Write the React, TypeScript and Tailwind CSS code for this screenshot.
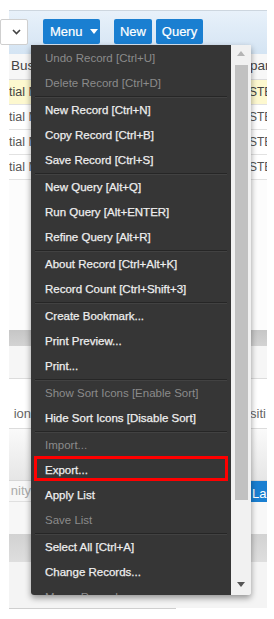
import React from "react";

type Item = { label: string; disabled?: boolean } | "sep";

const items: Item[] = [
  { label: "Undo Record [Ctrl+U]", disabled: true },
  { label: "Delete Record [Ctrl+D]", disabled: true },
  "sep",
  { label: "New Record [Ctrl+N]" },
  { label: "Copy Record [Ctrl+B]" },
  { label: "Save Record [Ctrl+S]" },
  "sep",
  { label: "New Query [Alt+Q]" },
  { label: "Run Query [Alt+ENTER]" },
  { label: "Refine Query [Alt+R]" },
  "sep",
  { label: "About Record [Ctrl+Alt+K]" },
  { label: "Record Count [Ctrl+Shift+3]" },
  "sep",
  { label: "Create Bookmark..." },
  { label: "Print Preview..." },
  { label: "Print..." },
  "sep",
  { label: "Show Sort Icons [Enable Sort]", disabled: true },
  { label: "Hide Sort Icons [Disable Sort]" },
  "sep",
  { label: "Import...", disabled: true },
  { label: "Export..." },
  { label: "Apply List" },
  { label: "Save List", disabled: true },
  "sep",
  { label: "Select All [Ctrl+A]" },
  { label: "Change Records..." },
  { label: "Merge Records...", disabled: true },
];

function Row({ left, right, yellow }: { left: string; right: string; yellow?: boolean }) {
  return (
    <div
      className={
        "flex h-[25px] items-center justify-between border-b border-[#e2e2e2] text-[12.5px] " +
        (yellow ? "bg-[#fdf8cf] text-[#444]" : "bg-white text-[#555]")
      }
    >
      <div className="whitespace-nowrap overflow-hidden w-[22px]">{left}</div>
      <div className="whitespace-nowrap overflow-hidden w-[18px] text-[12px]">{right}</div>
    </div>
  );
}

export default function App() {
  return (
    <div className="relative w-[274px] h-[619px] overflow-hidden bg-white font-['Liberation_Sans',Arial,sans-serif]">
      {/* page */}
      <div className="ml-[9px] w-[258px] pt-[10px] flex flex-col">
        {/* toolbar */}
        <div className="h-[44px] border-t border-[#cdd6df] bg-gradient-to-b from-[#e8f1fa] to-[#d4e4f3] flex items-start pt-[8px]">
          <div className="-ml-[9px] w-[28px] h-[26px] bg-white border border-[#cfcfcf] rounded-[2px] flex items-center justify-end pr-[6px]">
            <svg width="9" height="6" viewBox="0 0 9 6">
              <path d="M1 1 L4.5 4.5 L8 1" fill="none" stroke="#444" strokeWidth="1.6" />
            </svg>
          </div>
          <div className="ml-[15px] w-[57px] h-[25px] bg-[#1a7fd1] rounded-[2px] text-white text-[13px] flex items-center pl-[7px] gap-[7px] [-webkit-text-stroke:0.2px_#ffffff]">
            <span>Menu</span>
            <svg width="8" height="6" viewBox="0 0 8 6">
              <path d="M0 0 H8 L4 5 Z" fill="#fff" />
            </svg>
          </div>
          <div className="ml-[14px] w-[38px] h-[25px] bg-[#1a7fd1] rounded-[2px] text-white text-[13px] flex items-center justify-center [-webkit-text-stroke:0.2px_#ffffff]">
            New
          </div>
          <div className="ml-[4px] w-[47px] h-[25px] bg-[#1a7fd1] rounded-[2px] text-white text-[13px] flex items-center justify-center [-webkit-text-stroke:0.2px_#ffffff]">
            Query
          </div>
        </div>
        {/* table */}
        <div className="flex h-[26px] items-center justify-between border-b border-[#dcdcdc] bg-[#f7f7f7] text-[13.5px] text-[#444]">
          <div className="whitespace-nowrap overflow-hidden w-[22px] pl-[2px]">Business</div>
          <div className="whitespace-nowrap overflow-hidden w-[18px] pl-[1px]">par</div>
        </div>
        <Row left="tial Match" right="STEP" yellow />
        <Row left="tial Match" right="STEP" />
        <Row left="tial Match" right="STEP" />
        <Row left="tial Match" right="STEP" />
        <div className="h-[150px] bg-[#fcfcfc]" />
        <div className="h-[16px] bg-gradient-to-b from-[#c6c6c6] to-[#d3d3d3]" />
        <div className="h-[33px] bg-[#f6f6f6] border-b border-[#dcdcdc]" />
        <div className="h-[50px] bg-white border-b border-[#dcdcdc] flex items-end justify-between pb-[5px] text-[13px] text-[#666]">
          <div className="whitespace-nowrap overflow-hidden w-[22px] flex justify-end">ion</div>
          <div className="whitespace-nowrap overflow-hidden w-[17px]">siti</div>
        </div>
        <div className="h-[52px] bg-gradient-to-b from-[#fafafa] to-[#e6e6e6] border-b border-[#d6d6d6]" />
        <div className="h-[21px] bg-[#f7f7f7] border-b border-[#e0e0e0] flex items-center justify-between text-[13px] text-[#aaa]">
          <div className="whitespace-nowrap overflow-hidden w-[22px] flex justify-end">nity</div>
          <div className="w-[17px] h-[25px] self-start bg-[#1a7fd1] text-white text-[13px] pl-[2px] flex items-center overflow-hidden">
            Lang
          </div>
        </div>
        <div className="h-[32px] bg-[#f7f7f7]" />
        <div className="h-[28px] bg-gradient-to-b from-[#d2d2d2] to-[#dedede]" />
        <div className="h-[46px] bg-[#f4f4f4]" />
        <div className="w-[167px] h-px bg-[#cfcfcf]" />
      </div>

      {/* popup menu */}
      <div className="absolute left-[31px] top-[45px] w-[220px] h-[550px] flex rounded-b-[3px] overflow-hidden shadow-[0_3px_6px_rgba(0,0,0,0.4)]">
        <div className="w-[200px] h-full bg-[#363636] pt-[1px] overflow-hidden">
          {items.map((it, i) =>
            it === "sep" ? (
              <div key={i} className="mx-[4px] border-t border-[#262626] border-b border-b-[#424242]" />
            ) : (
              <div
                key={i}
                className={
                  "h-[25px] flex items-center pl-[14px] text-[11.5px] whitespace-nowrap " +
                  (it.disabled
                    ? "text-[#8b8b8b]"
                    : "text-[#eeeeee] [-webkit-text-stroke:0.25px_#eeeeee]")
                }
              >
                {it.label}
              </div>
            )
          )}
        </div>
        <div className="w-[20px] h-full bg-[#f1f1f1] flex flex-col items-center">
          <div className="mt-[6px] w-0 h-0 border-l-[4px] border-r-[4px] border-b-[5px] border-l-transparent border-r-transparent border-b-[#b4b4b4]" />
          <div className="mt-[9px] w-[13px] h-[435px] bg-[#c1c1c1] ml-[1px]" />
          <div className="mt-auto mb-[8px] w-0 h-0 border-l-[4px] border-r-[4px] border-t-[5px] border-l-transparent border-r-transparent border-t-[#555]" />
        </div>
      </div>

      {/* red annotation box */}
      <div className="absolute left-[34px] top-[456px] w-[194px] h-[25px] border-[3px] border-[#ff0000]" />
    </div>
  );
}
